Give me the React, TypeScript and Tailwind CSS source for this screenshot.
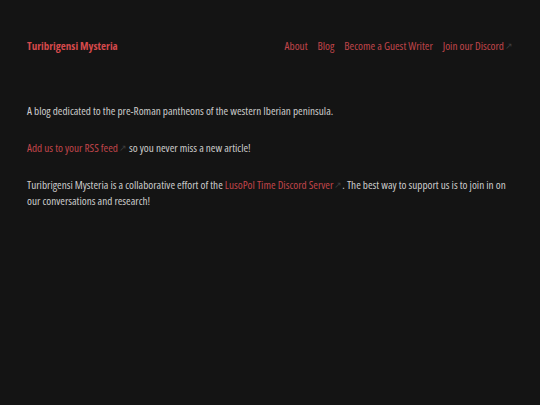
const nav = [
  { label: "About" },
  { label: "Blog" },
  { label: "Become a Guest Writer" },
  { label: "Join our Discord", external: true },
];

function Ext() {
  return <span className="ml-[1px] align-[1px] text-[9px] text-[#3e3e3e]">↗</span>;
}

export default function App() {
  return (
    <div className="min-h-screen bg-[#141414] px-[27px] font-['Open_Sans',sans-serif] font-stretch-condensed text-[11.2px] leading-[16px] text-[#cbcbcb]">
      <header className="flex items-center justify-between pt-[38px]">
        <a className="text-[11px] font-bold text-[#d4494b]">Turibrigensi Mysteria</a>
        <nav className="flex items-center gap-[10px] text-[#c0454a]">
          {nav.map((n) => (
            <a key={n.label}>
              {n.label}
              {n.external && <Ext />}
            </a>
          ))}
        </nav>
      </header>

      <main className="mt-[49px] flex max-w-[488px] flex-col gap-[21px]">
        <p>A blog dedicated to the pre-Roman pantheons of the western Iberian peninsula.</p>
        <p>
          <a className="text-[#c0454a]">Add us to your RSS feed</a>
          <Ext /> so you never miss a new article!
        </p>
        <p>
          Turibrigensi Mysteria is a collaborative effort of the{" "}
          <a className="text-[#c0454a]">LusoPol Time Discord Server</a>
          <Ext />. The best way to support us is to join in on our conversations and research!
        </p>
      </main>
    </div>
  );
}
